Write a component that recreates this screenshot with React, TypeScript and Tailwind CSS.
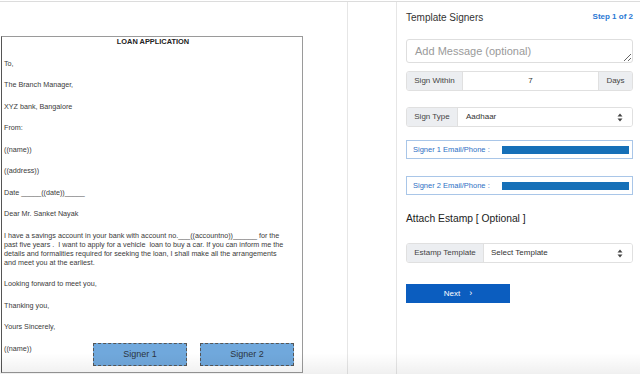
import React from 'react';

const docFont = { fontFamily: '"Liberation Sans", Arial, sans-serif' };

function UpDown() {
  return (
    <svg width="6" height="9" viewBox="0 0 6 9" className="shrink-0">
      <path d="M3 0.5 L5.5 3.5 L0.5 3.5 Z" fill="#444" />
      <path d="M3 8.5 L5.5 5.5 L0.5 5.5 Z" fill="#444" />
    </svg>
  );
}

function SignerBox({ label }: { label: string }) {
  return (
    <div className="h-[23px] w-[94px] border border-dashed border-[#555] bg-[#70a8dc] flex items-center justify-center text-[9px] text-[#2d3440]">
      {label}
    </div>
  );
}

function DocLine({ children }: { children: React.ReactNode }) {
  return <div className="h-[9px] leading-[9px] whitespace-nowrap">{children}</div>;
}

function Document() {
  return (
    <div className="relative ml-[1px] mt-[34px] w-[302px] h-[337px] border border-[#9a9a9a] border-l-[#555] bg-white text-[7.2px] text-[#3a3a3a]" style={docFont}>
      <div className="pl-[2px] flex flex-col gap-[12.5px]">
        <div className="h-[9px] leading-[9px] text-center font-bold text-[7.4px] text-[#222]">LOAN APPLICATION</div>
        <DocLine>To,</DocLine>
        <DocLine>The Branch Manager,</DocLine>
        <DocLine>XYZ bank, Bangalore</DocLine>
        <DocLine>From:</DocLine>
        <DocLine>((name))</DocLine>
        <DocLine>((address))</DocLine>
        <DocLine>Date _____((date))_____</DocLine>
        <DocLine>Dear Mr. Sanket Nayak</DocLine>
        <div className="leading-[9px] whitespace-nowrap">
          <div>I have a savings account in your bank with account no.___((accountno))______ for the</div>
          <div>past five years .&nbsp; I want to apply for a vehicle&nbsp; loan to buy a car. If you can inform me the</div>
          <div>details and formalities required for seeking the loan, I shall make all the arrangements</div>
          <div>and meet you at the earliest.</div>
        </div>
        <DocLine>Looking forward to meet you,</DocLine>
        <DocLine>Thanking you,</DocLine>
        <DocLine>Yours Sincerely,</DocLine>
        <DocLine>((name))</DocLine>
      </div>
      <div className="absolute left-[91px] top-[306px] flex gap-[13px]">
        <SignerBox label="Signer 1" />
        <SignerBox label="Signer 2" />
      </div>
    </div>
  );
}

function Addon({ children, w }: { children: React.ReactNode; w: string }) {
  return (
    <div className={`${w} shrink-0 h-full flex items-center justify-center bg-[#eceef1] text-[8px] text-[#444]`}>
      {children}
    </div>
  );
}

export default function App() {
  return (
    <div className="relative w-[640px] h-[374px] overflow-hidden bg-white border-t border-[#dcdcdc] mt-[1px]" style={docFont}>
      <div className="flex h-full">
        <div className="w-[347px] shrink-0">
          <Document />
        </div>
        <div className="w-[49px] shrink-0 border-l border-[#e6e6e6]" />
        <div className="flex-1 border-l border-[#e6e6e6] pl-[9px] pt-[9px]">
          <div className="w-[227px] flex flex-col">
            <div className="flex items-center justify-between h-[12px]">
              <span className="text-[10px] text-[#333]">Template Signers</span>
              <span className="text-[8px] text-[#2a78d4] font-semibold">Step 1 of 2</span>
            </div>
            <textarea
              className="mt-[16px] h-[24px] w-full border border-[#dedede] rounded-[3px] px-[8px] py-[4px] text-[11px] leading-[14px] text-[#333] placeholder:text-[#9a9a9a] outline-none resize-y"
              placeholder="Add Message (optional)"
              style={docFont}
            />
            <div className="mt-[8px] h-[20px] flex border border-[#e0e0e0] rounded-[3px] overflow-hidden">
              <Addon w="w-[56px] border-r border-[#e0e0e0]">Sign Within</Addon>
              <div className="flex-1 flex items-center justify-center text-[8px] text-[#333] bg-white">7</div>
              <Addon w="w-[34px] border-l border-[#e0e0e0]">Days</Addon>
            </div>
            <div className="mt-[16px] h-[20px] flex border border-[#e0e0e0] rounded-[3px] overflow-hidden">
              <Addon w="w-[51px] border-r border-[#e0e0e0]">Sign Type</Addon>
              <div className="flex-1 flex items-center justify-between pl-[8px] pr-[9px] text-[8px] text-[#333] bg-white">
                <span>Aadhaar</span>
                <UpDown />
              </div>
            </div>
            <div className="mt-[13px] h-[19px] flex items-center border border-[#a9c6e8] pl-[6px] pr-[3px]">
              <span className="text-[7.5px] text-[#2e6fc4] w-[89px] shrink-0">Signer 1 Email/Phone :</span>
              <div className="h-[8px] flex-1 bg-[#1670b8]" />
            </div>
            <div className="mt-[17px] h-[19px] flex items-center border border-[#a9c6e8] pl-[6px] pr-[3px]">
              <span className="text-[7.5px] text-[#2e6fc4] w-[89px] shrink-0">Signer 2 Email/Phone :</span>
              <div className="h-[8px] flex-1 bg-[#1670b8]" />
            </div>
            <div className="mt-[18px] h-[12px] leading-[12px] text-[10.3px] text-[#222]">Attach Estamp [ Optional ]</div>
            <div className="mt-[18px] h-[20px] flex border border-[#e0e0e0] rounded-[3px] overflow-hidden">
              <Addon w="w-[77px] border-r border-[#e0e0e0]">Estamp Template</Addon>
              <div className="flex-1 flex items-center justify-between pl-[7px] pr-[9px] text-[8px] text-[#333] bg-white">
                <span>Select Template</span>
                <UpDown />
              </div>
            </div>
            <button className="mt-[21px] h-[19px] w-[104px] bg-[#0b5dbf] text-white text-[8px] flex items-center justify-center gap-[9px]">
              <span>Next</span>
              <span className="text-[9px] leading-none">›</span>
            </button>
          </div>
        </div>
      </div>
      <div className="absolute left-0 right-0 bottom-0 h-[22px] bg-gradient-to-b from-transparent to-[#00000010] pointer-events-none" />
    </div>
  );
}
